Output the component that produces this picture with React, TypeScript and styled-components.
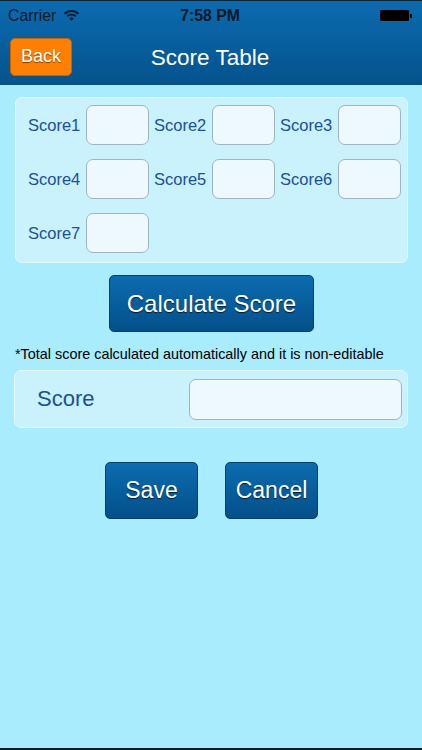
import styled, { createGlobalStyle } from "styled-components";

const GlobalStyle = createGlobalStyle`
  html, body {
    margin: 0;
    padding: 0;
  }
  body {
    font-family: "Liberation Sans", Arial, sans-serif;
    background: #a8ecfe;
  }
`;

const Page = styled.div`
  height: 750px;
  box-sizing: border-box;
  background: #a8ecfe;
  border-bottom: 2px solid #0c1c28;
  display: flex;
  flex-direction: column;
`;

const Header = styled.header`
  height: 85px;
  box-sizing: border-box;
  border-top: 1px solid #0a2434;
  background: linear-gradient(#0b6bb0, #04528c);
  display: flex;
  flex-direction: column;
`;

const StatusBar = styled.div`
  height: 29px;
  display: grid;
  grid-template-columns: 1fr auto 1fr;
  align-items: center;
  padding: 0 10px 0 8px;
  font-size: 15.8px;
  color: #0a1826;
`;

const Carrier = styled.div`
  display: flex;
  align-items: center;
  gap: 8px;
`;

const Time = styled.div`
  font-weight: bold;
`;

const Battery = styled.div`
  justify-self: end;
  display: flex;
  align-items: center;

  &::before {
    content: "";
    width: 29px;
    height: 11px;
    border-radius: 1px;
    background: #000;
  }
  &::after {
    content: "";
    width: 2px;
    height: 4px;
    background: #000;
    margin-left: 1px;
  }
`;

const NavBar = styled.nav`
  flex: 1;
  display: grid;
  grid-template-columns: 1fr auto 1fr;
  align-items: center;
  padding: 0 10px 2px;
`;

const BackButton = styled.button`
  justify-self: start;
  width: 62px;
  height: 38px;
  border-radius: 5px;
  border: 1px solid #c86400;
  background: #ff7f00;
  color: #fff;
  font-family: inherit;
  font-size: 18px;
  text-shadow: 0 1px 1px rgba(0, 0, 0, 0.5);
  padding: 0;
`;

const Title = styled.h1`
  margin: 0 0 0 -2px;
  font-size: 22.5px;
  font-weight: normal;
  color: #fff;
  padding-top: 3px;
`;

const Content = styled.main`
  display: flex;
  flex-direction: column;
  padding: 12px 14px 0 15px;
`;

const Panel = styled.section`
  background: #c9f2fc;
  border: 1px solid #e4f8fd;
  border-radius: 7px;
`;

const ScoreGrid = styled(Panel)`
  display: grid;
  grid-template-columns: repeat(3, 121px);
  column-gap: 5px;
  row-gap: 14px;
  padding: 7px 5px 9px 12px;
`;

const Cell = styled.label`
  display: flex;
  align-items: center;
`;

const CellLabel = styled.span`
  width: 58px;
  font-size: 16.5px;
  color: #1b4f9c;
`;

const Field = styled.div<{ $wide?: boolean }>`
  box-sizing: border-box;
  width: ${(p) => (p.$wide ? "213px" : "63px")};
  height: ${(p) => (p.$wide ? "41px" : "40px")};
  border: 1px solid #9db5bf;
  border-radius: 7px;
  background: #eef9fd;
`;

const BlueButton = styled.button<{ $w: number; $fs: number }>`
  width: ${(p) => p.$w}px;
  height: 57px;
  border-radius: 5px;
  border: 1px solid #033f6c;
  background: linear-gradient(#0b6cb0, #035089);
  color: #fff;
  font-family: inherit;
  font-size: ${(p) => p.$fs}px;
  text-shadow: 0 1px 1px rgba(0, 0, 0, 0.7);
  padding: 0;
`;

const CalcRow = styled.div`
  display: flex;
  justify-content: center;
  margin-top: 12px;
`;

const Note = styled.p`
  margin: 14px 0 8px;
  font-size: 14.4px;
  color: #000;
`;

const TotalPanel = styled(Panel)`
  height: 58px;
  box-sizing: border-box;
  margin-left: -1px;
  display: flex;
  align-items: center;
  justify-content: space-between;
  padding: 0 5px 0 22px;
`;

const TotalLabel = styled.span`
  font-size: 22px;
  color: #1b4f9c;
`;

const Actions = styled.div`
  display: flex;
  justify-content: center;
  gap: 27px;
  margin-top: 34px;
`;

function WifiIcon() {
  return (
    <svg width="15" height="11" viewBox="0 0 15 11">
      <path
        d="M7.5 0C4.6 0 2 1.1 0 3l1.3 1.4C3 2.8 5.1 1.9 7.5 1.9s4.5 .9 6.2 2.5L15 3C13 1.1 10.4 0 7.5 0z"
        fill="#0a1826"
      />
      <path
        d="M7.5 3.7c-1.9 0-3.6.7-4.9 1.9l1.4 1.4c.9-.9 2.1-1.4 3.5-1.4s2.6.5 3.5 1.4l1.4-1.4c-1.3-1.2-3-1.9-4.9-1.9z"
        fill="#0a1826"
      />
      <path d="M7.5 7.4c-.9 0-1.6.3-2.2.9L7.5 11l2.2-2.7c-.6-.6-1.3-.9-2.2-.9z" fill="#0a1826" />
    </svg>
  );
}

const scores = ["Score1", "Score2", "Score3", "Score4", "Score5", "Score6", "Score7"];

export default function App() {
  return (
    <>
      <GlobalStyle />
      <Page>
        <Header>
          <StatusBar>
            <Carrier>
              Carrier
              <WifiIcon />
            </Carrier>
            <Time>7:58 PM</Time>
            <Battery />
          </StatusBar>
          <NavBar>
            <BackButton>Back</BackButton>
            <Title>Score Table</Title>
            <span />
          </NavBar>
        </Header>
        <Content>
          <ScoreGrid>
            {scores.map((s) => (
              <Cell key={s}>
                <CellLabel>{s}</CellLabel>
                <Field />
              </Cell>
            ))}
          </ScoreGrid>
          <CalcRow>
            <BlueButton $w={205} $fs={24}>
              Calculate Score
            </BlueButton>
          </CalcRow>
          <Note>*Total score calculated automatically and it is non-editable</Note>
          <TotalPanel>
            <TotalLabel>Score</TotalLabel>
            <Field $wide />
          </TotalPanel>
          <Actions>
            <BlueButton $w={93} $fs={23}>
              Save
            </BlueButton>
            <BlueButton $w={93} $fs={23}>
              Cancel
            </BlueButton>
          </Actions>
        </Content>
      </Page>
    </>
  );
}
